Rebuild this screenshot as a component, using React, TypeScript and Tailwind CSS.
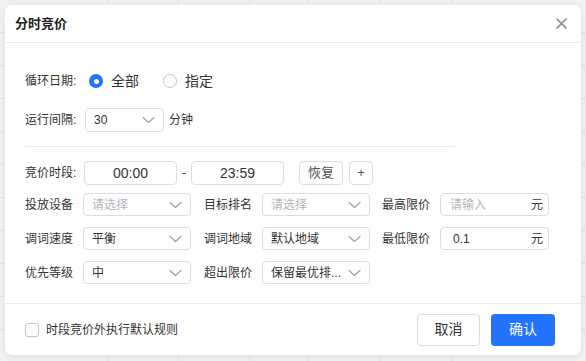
import React from 'react';

const FONT = { fontFamily: '"Liberation Sans", "Noto Sans CJK SC", sans-serif' };

const Chevron = () => (
  <svg width="13" height="8" viewBox="0 0 13 8" fill="none" className="shrink-0">
    <path d="M1 1.5 L6.5 6.5 L12 1.5" stroke="#a3a3ab" strokeWidth="1.3" strokeLinecap="round" strokeLinejoin="round" />
  </svg>
);

function Select({ value, placeholder, width }: { value?: string; placeholder?: string; width: string }) {
  return (
    <div className={`${width} h-full border border-[#dcdce2] rounded-[4px] flex items-center justify-between pl-[8px] pr-[8px] bg-white`}>
      <span className={`text-[12px] whitespace-nowrap ${value ? 'text-[#333]' : 'text-[#b5b5bd]'}`}>{value || placeholder}</span>
      <Chevron />
    </div>
  );
}

function PriceInput({ value, placeholder }: { value?: string; placeholder?: string }) {
  return (
    <div className="w-[109px] h-full border border-[#dcdce2] rounded-[4px] flex items-center justify-between pl-[9px] pr-[5px]">
      <span className={`text-[12px] ${value ? 'text-[#333] pl-[3px]' : 'text-[#b5b5bd]'}`}>{value || placeholder}</span>
      <span className="text-[12px] text-[#333]">元</span>
    </div>
  );
}

const Label = ({ children, w = 'w-[58px]' }: { children: React.ReactNode; w?: string }) => (
  <span className={`${w} shrink-0 text-[12px] text-[#333]`}>{children}</span>
);

export default function App() {
  const cols = Array.from({ length: 7 });
  const rows = Array.from({ length: 11 });

  return (
    <div className="relative w-[586px] h-[361px] overflow-hidden bg-[#f2f2f4]" style={FONT}>
      {/* table behind the mask */}
      <div className="grid grid-cols-[108px_71px_71px_59px_72px_71px_1fr]">
        {rows.map((_, r) =>
          cols.map((_, c) => <div key={`${r}-${c}`} className="h-[33px] border-r border-b border-[#e4e4e8]" />)
        )}
      </div>

      <div className="absolute left-[5px] top-[5px] w-[576px] h-[350px] bg-white rounded-[7px] shadow-[0_2px_10px_rgba(0,0,0,0.08)] flex flex-col">
        <div className="h-[38px] shrink-0 border-b border-[#ececef] flex items-center justify-between pl-[10px] pr-[14px]">
          <span className="text-[13px] font-bold text-[#222]">分时竞价</span>
          <svg width="11" height="11" viewBox="0 0 11 11">
            <path d="M1 1 L10 10 M10 1 L1 10" stroke="#8a8a92" strokeWidth="1.7" strokeLinecap="round" />
          </svg>
        </div>

        <div className="flex-1 px-[20px] pt-[26px]">
          <div className="h-[24px] flex items-center">
            <Label w="w-[64px]">循环日期:</Label>
            <div className="w-[14px] h-[14px] rounded-full bg-[#2473ff] flex items-center justify-center">
              <div className="w-[5px] h-[5px] rounded-full bg-white" />
            </div>
            <span className="ml-[8px] text-[14px] text-[#333]">全部</span>
            <div className="ml-[24px] w-[14px] h-[14px] rounded-full border border-[#c4c4cc]" />
            <span className="ml-[8px] text-[14px] text-[#333]">指定</span>
          </div>

          <div className="mt-[15px] h-[24px] flex items-center">
            <Label w="w-[60px]">运行间隔:</Label>
            <Select value="30" width="w-[79px]" />
            <span className="ml-[5px] text-[12px] text-[#333]">分钟</span>
          </div>

          <div className="mt-[14px] w-[430px] h-px bg-[#ececef]" />

          <div className="mt-[14px] h-[24px] flex items-center">
            <Label w="w-[59px]">竞价时段:</Label>
            <div className="w-[93px] h-full border border-[#dcdce2] rounded-[4px] flex items-center justify-center text-[14px] text-[#333]">00:00</div>
            <span className="w-[14px] text-center text-[12px] text-[#333]">-</span>
            <div className="w-[93px] h-full border border-[#dcdce2] rounded-[4px] flex items-center justify-center text-[14px] text-[#333]">23:59</div>
            <div className="ml-[15px] w-[44px] h-full border border-[#dcdce2] rounded-[4px] flex items-center justify-center text-[13px] text-[#555]">恢复</div>
            <div className="ml-[6px] w-[24px] h-full border border-[#dcdce2] rounded-[4px] flex items-center justify-center text-[13px] text-[#555]">+</div>
          </div>

          <div className="mt-[8px] h-[23px] flex items-center">
            <Label>投放设备</Label>
            <Select placeholder="请选择" width="w-[108px]" />
            <span className="w-[13px]" />
            <Label>目标排名</Label>
            <Select placeholder="请选择" width="w-[108px]" />
            <span className="w-[12px]" />
            <Label>最高限价</Label>
            <PriceInput placeholder="请输入" />
          </div>

          <div className="mt-[11px] h-[23px] flex items-center">
            <Label>调词速度</Label>
            <Select value="平衡" width="w-[108px]" />
            <span className="w-[13px]" />
            <Label>调词地域</Label>
            <Select value="默认地域" width="w-[108px]" />
            <span className="w-[12px]" />
            <Label>最低限价</Label>
            <PriceInput value="0.1" />
          </div>

          <div className="mt-[11px] h-[23px] flex items-center">
            <Label>优先等级</Label>
            <Select value="中" width="w-[108px]" />
            <span className="w-[13px]" />
            <Label>超出限价</Label>
            <Select value="保留最优排..." width="w-[108px]" />
          </div>
        </div>

        <div className="h-[52px] shrink-0 border-t border-[#ececef] flex items-center justify-between pl-[20px] pr-[26px]">
          <div className="flex items-center">
            <div className="w-[14px] h-[14px] rounded-[3px] border border-[#c4c4cc]" />
            <span className="ml-[7px] text-[12px] text-[#333]">时段竞价外执行默认规则</span>
          </div>
          <div className="flex items-center gap-[11px]">
            <div className="w-[63px] h-[32px] border border-[#dcdce2] rounded-[4px] flex items-center justify-center text-[14px] text-[#333]">取消</div>
            <div className="w-[64px] h-[32px] rounded-[4px] bg-[#2473ff] flex items-center justify-center text-[14px] text-white">确认</div>
          </div>
        </div>
      </div>
    </div>
  );
}
